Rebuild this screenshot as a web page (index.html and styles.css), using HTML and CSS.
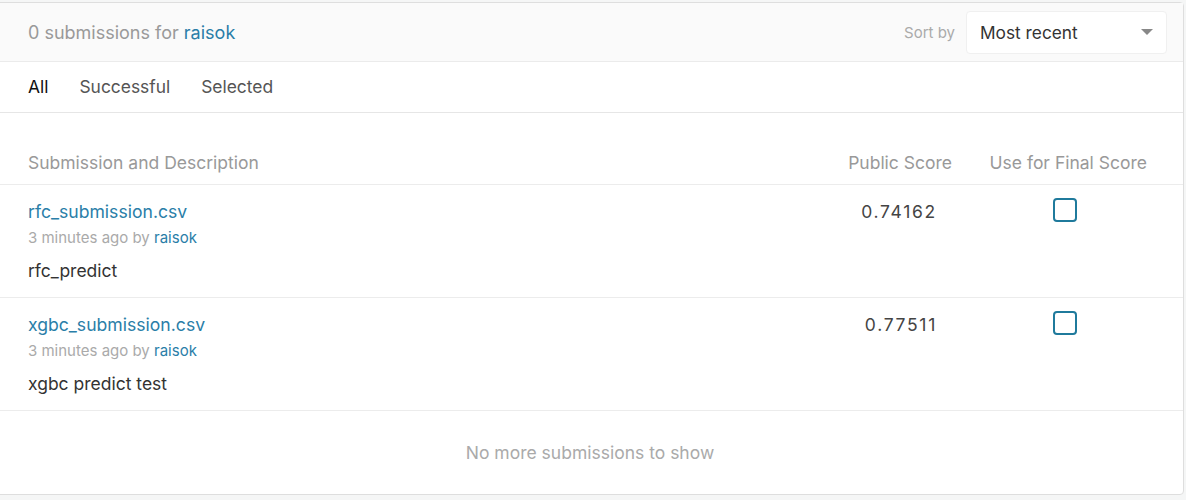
FILE: index.html
```html
<!DOCTYPE html>
<html>
<head>
<meta charset="utf-8">
<link rel="stylesheet" href="styles.css">
</head>
<body>
<div class="card">
  <div class="head">
    <div class="count">0 submissions for <a class="link">raisok</a></div>
    <div class="sort">
      <span class="sort-label">Sort by</span>
      <div class="select"><span>Most recent</span><span class="caret"></span></div>
    </div>
  </div>
  <div class="tabs">
    <span class="tab active">All</span>
    <span class="tab">Successful</span>
    <span class="tab">Selected</span>
  </div>
  <div class="spacer"></div>
  <div class="row th">
    <div class="c1">Submission and Description</div>
    <div class="c2">Public Score</div>
    <div class="c3">Use for Final Score</div>
  </div>
  <div class="row sub">
    <div class="c1">
      <div class="fname">rfc_submission.csv</div>
      <div class="meta">3 minutes ago by <a class="link">raisok</a></div>
      <div class="desc">rfc_predict</div>
    </div>
    <div class="c2 score">0.74162</div>
    <div class="c3"><span class="box"></span></div>
  </div>
  <div class="row sub">
    <div class="c1">
      <div class="fname">xgbc_submission.csv</div>
      <div class="meta">3 minutes ago by <a class="link">raisok</a></div>
      <div class="desc">xgbc predict test</div>
    </div>
    <div class="c2 score">0.77511</div>
    <div class="c3"><span class="box"></span></div>
  </div>
  <div class="foot">No more submissions to show</div>
</div>
</body>
</html>
```
FILE: styles.css
```css
html, body { margin: 0; padding: 0; background: #f5f6f6; }
body { font-family: Inter, "Noto Sans", sans-serif; color: #333; }
.card {
  margin: 2px 2px 0 -4px;
  height: 493px;
  background: #fff;
  border: 1px solid #dedede;
  border-radius: 0 4px 4px 0;
  box-sizing: border-box;
  display: flex;
  flex-direction: column;
}
.link { color: #2a7ea8; text-decoration: none; }
.head {
  height: 59px;
  box-sizing: border-box;
  background: #fafafa;
  border-bottom: 1px solid #ebebeb;
  display: flex;
  align-items: center;
  justify-content: space-between;
  padding: 0 16px 0 31px;
}
.count { font-size: 18px; color: #999; }
.sort { display: flex; align-items: center; gap: 11px; }
.sort-label { font-size: 15px; color: #aaa; }
.select {
  width: 201px; height: 43px; box-sizing: border-box;
  background: #fff;
  border: 1px solid #f0f0f0;
  border-radius: 4px;
  display: flex; align-items: center; justify-content: space-between;
  padding: 0 13px 0 13px;
  font-size: 17.3px; color: #333;
}
.caret {
  width: 0; height: 0;
  border-left: 6px solid transparent; border-right: 6px solid transparent;
  border-top: 6px solid #888;
}
.tabs {
  height: 51px; box-sizing: border-box;
  border-bottom: 1px solid #e6e6e6;
  display: flex; align-items: center; gap: 31px;
  padding: 0 0 2px 31px;
  font-size: 17.4px;
}
.tab { color: #555; }
.tab.active { color: #111; }
.spacer { height: 28px; }
.row {
  display: grid;
  grid-template-columns: 1fr 125px 195px;
  padding: 0 36px 0 31px;
  border-bottom: 1px solid #ececec;
}
.th { height: 43px; align-items: center; font-size: 17.5px; color: #999; }
.th .c2 { text-align: right; padding-right: 0; }
.th .c3 { text-align: right; }
.sub { height: 113px; box-sizing: border-box; padding-top: 16px; }
.fname { font-size: 17.6px; color: #2a7ea8; line-height: 22px; }
.meta { font-size: 15px; color: #aaa; line-height: 18px; margin-top: 6px; }
.meta .link { color: #2a7ea8; }
.desc { font-size: 17.5px; color: #333; line-height: 22px; margin-top: 13px; }
.score { font-size: 17.5px; color: #444; line-height: 22px; text-align: right; padding-right: 15px; letter-spacing: 1.7px; }
.c3 { display: flex; justify-content: flex-end; }
.sub .c3 { padding-right: 70px; }
.box {
  width: 24px; height: 24px; box-sizing: border-box;
  border: 2px solid #1f7a9c; border-radius: 4px;
  margin-top: -3px;
}
.foot {
  flex: 1;
  display: flex; align-items: center; justify-content: center;
  font-size: 17.5px; color: #aaa;
}
```
